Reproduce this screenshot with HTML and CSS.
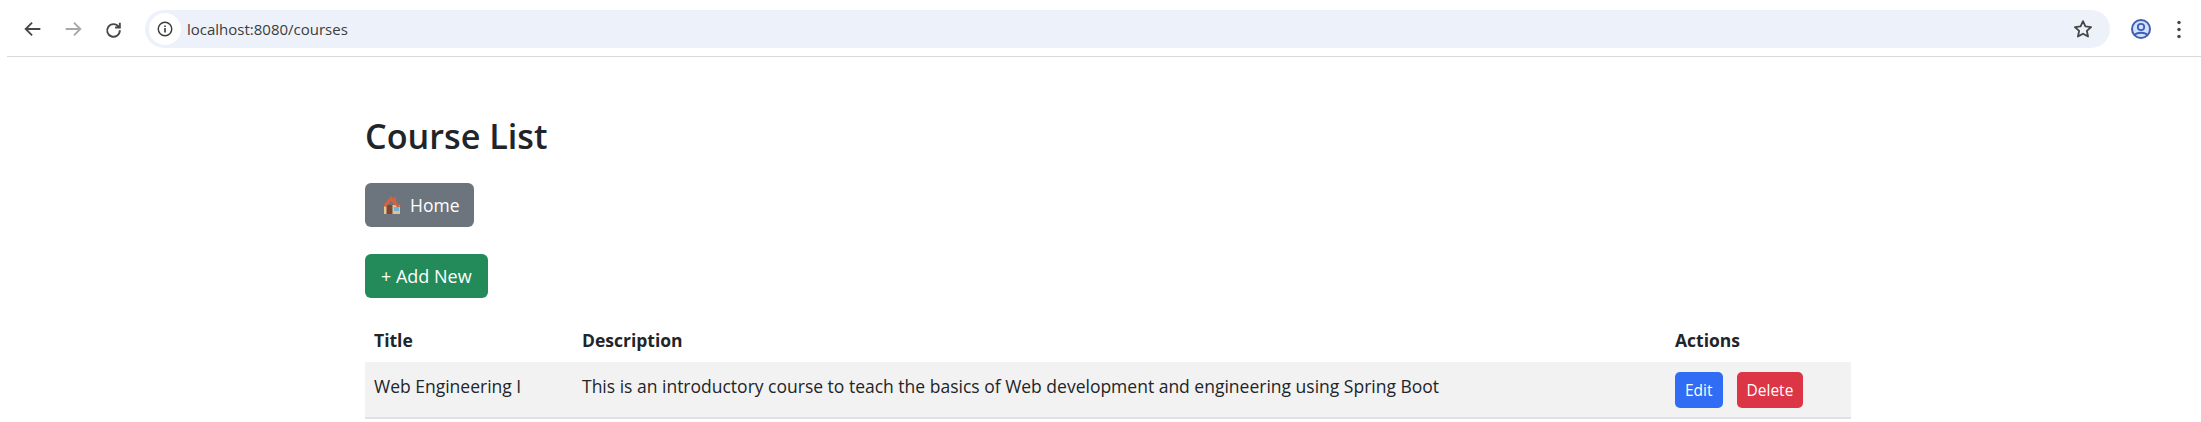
FILE: index.html
```html
<!DOCTYPE html>
<html lang="en">

<head>
  <title>Course List</title>
  <meta charset="utf-8">
  <link rel="stylesheet" href="styles.css">
</head>

<body>
  <div class="toolbar">
    <div class="nav-icons">
      <svg class="icon" viewBox="0 0 24 24"><path d="M20 12H5M11 5l-7 7 7 7" fill="none" stroke="#474747" stroke-width="2"/></svg>
      <svg class="icon" viewBox="0 0 24 24"><path d="M4 12h15M13 5l7 7-7 7" fill="none" stroke="#a8a8a8" stroke-width="2"/></svg>
      <svg class="icon icon-reload" viewBox="0 0 24 24"><path d="M18.500 8.500A8 8 0 1 0 20 13M20 3.500v6h-6" fill="none" stroke="#474747" stroke-width="2.400"/></svg>
    </div>
    <div class="omnibox">
      <span class="info-chip">
        <svg class="info-icon" viewBox="0 0 20 20"><circle cx="10" cy="10" r="7.500" fill="none" stroke="#3c3c3c" stroke-width="1.600"/><path d="M10 9v5M10 6v1.800" stroke="#3c3c3c" stroke-width="1.800"/></svg>
      </span>
      <span class="url">localhost:8080/courses</span>
      <svg class="star" viewBox="0 0 24 24"><path d="M12 3.500l2.600 5.700 6.200.7-4.600 4.200 1.300 6.100L12 17.100l-5.500 3.100 1.300-6.100-4.600-4.200 6.200-.7z" fill="none" stroke="#474747" stroke-width="2" stroke-linejoin="round"/></svg>
    </div>
    <div class="end-icons">
      <svg class="profile" viewBox="0 0 24 24"><circle cx="12" cy="12" r="9" fill="#d3e3fd" stroke="#3f5fb5" stroke-width="2"/><circle cx="12" cy="10" r="3.200" fill="none" stroke="#3f5fb5" stroke-width="1.800"/><path d="M6 18c1.500-3 10.500-3 12 0" fill="none" stroke="#3f5fb5" stroke-width="1.800"/></svg>
      <svg class="menu" viewBox="0 0 6 22"><circle cx="3" cy="3" r="2" fill="#474747"/><circle cx="3" cy="11" r="2" fill="#474747"/><circle cx="3" cy="19" r="2" fill="#474747"/></svg>
    </div>
  </div>

  <div class="container">
    <h1>Course List</h1>

    <a class="btn btn-secondary btn-home" href="#">
      <svg class="house" viewBox="0 0 18 18">
        <path d="M1 18V9h16v9z" fill="#e3c48f"/>
        <path d="M3.500 9h6v9h-6z" fill="#7a4636"/>
        <path d="M11 11h5v4h-5z" fill="#6cb4d8"/>
        <path d="M0 10L8 0l3 3V1h2v5l5 5h-4L8 5l-5 6z" fill="#d9603f"/>
      </svg>
      Home
    </a>
    <a class="btn btn-success btn-add" href="#">+ Add New</a>

    <table class="course-table">
      <thead>
        <tr>
          <th class="col-title">Title</th>
          <th class="col-desc">Description</th>
          <th class="col-actions">Actions</th>
        </tr>
      </thead>
      <tbody>
        <tr>
          <td>Web Engineering I</td>
          <td>This is an introductory course to teach the basics of Web development and engineering using Spring Boot</td>
          <td class="cell-actions">
            <div class="actions">
              <a class="btn btn-sm btn-primary" href="#">Edit</a>
              <a class="btn btn-sm btn-danger" href="#">Delete</a>
            </div>
          </td>
        </tr>
      </tbody>
    </table>
  </div>
</body>

</html>
```

FILE: styles.css
```css
body {
  margin: 0;
  font-family: "Open Sans", "Noto Sans", sans-serif;
  background-color: #fff;
  color: #212529;
  overflow: hidden;
}

a {
  text-decoration: none;
}

/* browser chrome */
.toolbar {
  display: flex;
  align-items: center;
  box-sizing: border-box;
  height: 57px;
  margin-left: 7px;
  padding-top: 2px;
  border-bottom: 1px solid #d9d9d9;
}

.nav-icons {
  display: flex;
  align-items: center;
  gap: 18px;
  padding-left: 15px;
  width: 138px;
  box-sizing: border-box;
}

.icon {
  width: 22px;
  height: 22px;
}

.icon-reload {
  width: 19px;
  height: 19px;
  margin-left: 2px;
}

.omnibox {
  display: flex;
  align-items: center;
  flex: 1;
  height: 38px;
  padding-right: 16px;
  background: #edf2fa;
  border-radius: 19px;
}

.info-chip {
  display: flex;
  align-items: center;
  justify-content: center;
  width: 32px;
  height: 32px;
  margin-left: 4px;
  background: #fff;
  border-radius: 50%;
}

.info-icon {
  width: 18px;
  height: 18px;
}

.url {
  flex: 1;
  margin-left: 6px;
  font-size: 15px;
  color: #3c3c3c;
}

.star {
  width: 22px;
  height: 22px;
}

.end-icons {
  display: flex;
  align-items: center;
  width: 91px;
  padding-left: 19px;
  box-sizing: border-box;
}

.profile {
  width: 24px;
  height: 24px;
}

.menu {
  width: 6px;
  height: 19px;
  margin-left: 23px;
}

/* page */
.container {
  width: 1486px;
  margin-left: 365px;
}

h1 {
  margin: 52px 0 20px;
  font-size: 34.200px;
  line-height: 54px;
  font-weight: 600;
}

.btn {
  display: inline-block;
  box-sizing: border-box;
  padding: 0 15px;
  border-radius: 6px;
  font-size: 17.500px;
  line-height: 44px;
  height: 44px;
  color: #fff;
}

.btn-home {
  display: flex;
  align-items: center;
  gap: 9px;
  width: 109px;
  padding: 0 17px 0 18px;
  background-color: #6c757d;
}

.house {
  flex: none;
  width: 18px;
  height: 18px;
}

.btn-add {
  display: block;
  width: 123px;
  margin-top: 27px;
  padding: 0 16px;
  font-size: 18px;
  background-color: #238a5a;
  white-space: nowrap;
}

.course-table {
  width: 100%;
  margin-top: 22px;
  border-collapse: collapse;
  table-layout: fixed;
  font-size: 17.500px;
}

.course-table th {
  box-sizing: border-box;
  height: 42px;
  padding: 0 9px 2px;
  text-align: left;
  font-weight: 700;
}

.course-table td {
  box-sizing: border-box;
  height: 56px;
  padding: 12px 9px 0;
  vertical-align: top;
  background-color: #f2f2f2;
  border-bottom: 2px solid #dee2e6;
}

.course-table .cell-actions {
  padding-top: 10px;
}

.col-title {
  width: 208px;
}

.col-actions {
  width: 185px;
}

.actions {
  display: flex;
  gap: 14px;
}

.btn-sm {
  height: 36px;
  line-height: 36px;
  padding: 0 10px;
  font-size: 15.500px;
  border-radius: 5px;
}

.btn-primary {
  background-color: #316cf4;
}

.btn-danger {
  background-color: #dc3545;
}
```
